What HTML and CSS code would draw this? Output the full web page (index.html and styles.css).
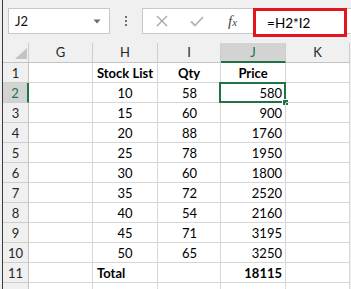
FILE: index.html
```html
<!DOCTYPE html>
<html>
<head>
<meta charset="utf-8">
<link rel="stylesheet" href="styles.css">
</head>
<body>
<div class="frame">
  <div class="bar">
    <div class="namebox">
      <span class="name">J2</span>
      <svg class="drop" width="8" height="5" viewBox="0 0 8 5"><path d="M0.5 0.5 H7.5 L4 4.5 Z" fill="#6b6b6b"/></svg>
    </div>
    <div class="dots"><i></i><i></i><i></i></div>
    <div class="fbox">
      <svg class="ico-x" width="12" height="12" viewBox="0 0 12 12"><path d="M1 1 L11 11 M11 1 L1 11" stroke="#a8a8a8" stroke-width="1.4" fill="none"/></svg>
      <svg class="ico-ok" width="14" height="11" viewBox="0 0 14 11"><path d="M1 5.5 L5 9.5 L13 1" stroke="#b4b4b4" stroke-width="1.8" fill="none"/></svg>
      <span class="fx">f<span class="fxx">x</span></span>
      <div class="formula">=H2*I2</div>
    </div>
  </div>
  <div class="sheet">
    <div class="c hd corner"><svg width="12" height="11" viewBox="0 0 12 11"><path d="M12 0 V11 H0 Z" fill="#c3c3c3"/></svg></div>
    <div class="c hd">G</div>
    <div class="c hd">H</div>
    <div class="c hd">I</div>
    <div class="c hd hsel">J</div>
    <div class="c hd">K</div>

    <div class="c rh">1</div><div class="c"></div><div class="c h b">Stock List</div><div class="c i b iq">Qty</div><div class="c jc b">Price</div><div class="c"></div>
    <div class="c rh rsel">2</div><div class="c"></div><div class="c h">10</div><div class="c i">58</div><div class="c j sel">580<span class="selbox"></span><span class="handle"></span></div><div class="c"></div>
    <div class="c rh">3</div><div class="c"></div><div class="c h">15</div><div class="c i">60</div><div class="c j">900</div><div class="c"></div>
    <div class="c rh">4</div><div class="c"></div><div class="c h">20</div><div class="c i">88</div><div class="c j">1760</div><div class="c"></div>
    <div class="c rh">5</div><div class="c"></div><div class="c h">25</div><div class="c i">78</div><div class="c j">1950</div><div class="c"></div>
    <div class="c rh">6</div><div class="c"></div><div class="c h">30</div><div class="c i">60</div><div class="c j">1800</div><div class="c"></div>
    <div class="c rh">7</div><div class="c"></div><div class="c h">35</div><div class="c i">72</div><div class="c j">2520</div><div class="c"></div>
    <div class="c rh">8</div><div class="c"></div><div class="c h">40</div><div class="c i">54</div><div class="c j">2160</div><div class="c"></div>
    <div class="c rh">9</div><div class="c"></div><div class="c h">45</div><div class="c i">71</div><div class="c j">3195</div><div class="c"></div>
    <div class="c rh">10</div><div class="c"></div><div class="c h">50</div><div class="c i">65</div><div class="c j">3250</div><div class="c"></div>
    <div class="c rh">11</div><div class="c"></div><div class="c b tl">Total</div><div class="c"></div><div class="c j b">18115</div><div class="c"></div>
    <div class="c rh"></div><div class="c"></div><div class="c"></div><div class="c"></div><div class="c"></div><div class="c"></div>
  </div>
</div>
</body>
</html>
```
FILE: styles.css
```css
html, body {
  margin: 0;
  padding: 0;
  background: #f0f0f0;
  width: 351px;
  height: 289px;
  overflow: hidden;
  font-family: Lato, "Liberation Sans", sans-serif;
}
.frame {
  margin-left: 2px;
  border-left: 1px solid #3a3a3a;
  height: 289px;
  overflow: hidden;
}
.bar {
  height: 43px;
  display: flex;
  align-items: flex-start;
  padding: 8px 0 0 5px;
  box-sizing: border-box;
  background: #f0f0f0;
}
.namebox {
  width: 102px;
  height: 26px;
  box-sizing: border-box;
  background: #fff;
  border: 1px solid #c8c8c8;
  display: flex;
  align-items: center;
  padding-left: 6px;
  padding-right: 8px;
}
.name {
  flex: 1;
  font-size: 13px;
  color: #111;
}
.drop { margin-top: 1px; }
.dots {
  width: 32px;
  height: 26px;
  display: flex;
  flex-direction: column;
  align-items: center;
  justify-content: center;
  gap: 2px;
}
.dots i {
  display: block;
  width: 2px;
  height: 2px;
  background: #6f6f6f;
}
.fbox {
  flex: 1;
  height: 26px;
  box-sizing: border-box;
  background: #fff;
  border: 1px solid #c8c8c8;
  border-right: none;
  display: flex;
  align-items: flex-start;
}
.ico-x { margin: 6px 0 0 13px; }
.ico-ok { margin: 7px 0 0 22px; }
.fx {
  margin: 2px 0 0 24px;
  font-family: "Liberation Serif", serif;
  font-style: italic;
  font-size: 15px;
  color: #444;
  line-height: 20px;
}
.fxx { font-size: 11px; }
.formula {
  margin: -1px 0 0 16px;
  width: 94px;
  height: 29px;
  box-sizing: border-box;
  border: 3px solid #e3141e;
  background: #fff;
  font-size: 13.5px;
  color: #000;
  padding: 4px 0 0 11px;
  line-height: 17px;
}
.sheet {
  display: grid;
  grid-template-columns: 26px 64px 65px 63px 65px 64px;
  grid-auto-rows: 20px;
  background: #fff;
  width: 347px;
}
.c {
  box-sizing: border-box;
  border-right: 1px solid #d6d6d6;
  border-bottom: 1px solid #d6d6d6;
  font-size: 13px;
  color: #000;
  line-height: 17px;
  padding-top: 2px;
  white-space: nowrap;
  position: relative;
}
.hd {
  background: #f0f0f0;
  border-right-color: #cdcdcd;
  border-bottom-color: #c3c3c3;
  text-align: center;
  color: #262626;
  padding-top: 1px;
}
.corner {
  display: flex;
  align-items: flex-end;
  justify-content: flex-end;
  padding: 0 1px 3px 0;
}
.hsel {
  background: #d3d3d3;
  border-bottom: 2px solid #217346;
  color: #217346;
}
.rh {
  background: #f0f0f0;
  border-right-color: #c3c3c3;
  border-bottom-color: #cdcdcd;
  text-align: center;
  color: #262626;
}
.rsel {
  background: #d3d3d3;
  border-right: 2px solid #217346;
  color: #217346;
}
.h { text-align: center; }
.i { padding-left: 24px; }
.iq { padding-left: 20px; }
.jc { text-align: center; }
.j { text-align: right; padding-right: 3px; }
.b { font-weight: 700; }
.tl { padding-left: 4px; }
.selbox {
  position: absolute;
  left: -2px;
  top: -1px;
  right: -1px;
  bottom: -1px;
  border: 2px solid #217346;
  pointer-events: none;
}
.handle {
  position: absolute;
  right: -4px;
  bottom: -4px;
  width: 5px;
  height: 5px;
  background: #217346;
  border: 1px solid #fff;
}
```
